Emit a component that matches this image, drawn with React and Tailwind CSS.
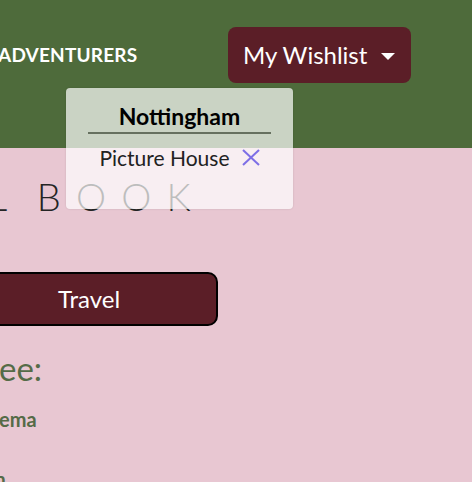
import { useState } from 'react';

export default function App() {
  const [open] = useState(true);

  return (
    <div className="relative min-h-screen w-[472px] h-[482px] overflow-hidden bg-[#e8c7d2] font-['Lato','Liberation_Sans',sans-serif]">
      {/* Navbar */}
      <header className="h-[148px] bg-[#4e6b3b] pt-[27px]">
        <div className="flex h-[56px] items-center">
          <span className="-ml-[2px] w-[138px] shrink-0 whitespace-nowrap text-[19px] font-bold tracking-[0.01em] text-white">ADVENTURERS</span>
          <button className="ml-[92px] flex h-[56px] w-[183px] items-center gap-[14px] rounded-[8px] bg-[#5b1e27] pl-[15px] text-[24px] text-white">
            My Wishlist
            <span className="mt-[2px] h-0 w-0 border-x-[7px] border-t-[7px] border-x-transparent border-t-white" />
          </button>
        </div>
      </header>

      {/* Page content */}
      <main>
        <h1 className="mt-[20px] -ml-[12px] whitespace-nowrap text-[38px] font-light tracking-[0.4em] [word-spacing:-10px] text-[#242424]">
          L BOOK
        </h1>
        <button className="mt-[47px] -ml-[40px] h-[54px] w-[258px] rounded-[10px] border-2 border-black bg-[#5b1e27] text-[24px] text-white">
          Travel
        </button>
        <h2 className="mt-[18px] -ml-[1px] text-[33px] text-[#556b47]">ee:</h2>
        <p className="mt-[10px] -ml-[1px] text-[20px] font-bold text-[#556b47]">ema</p>
        <p className="mt-[30px] -ml-[11px] text-[20px] font-bold text-[#556b47]">m</p>
      </main>

      {/* Wishlist dropdown */}
      {open && (
        <div className="absolute left-[66px] top-[88px] w-[227px] h-[121px] rounded-[4px] bg-white/70 shadow-[0_0_2px_rgba(0,0,0,0.15)]">
          <div className="mx-[22px] mt-[12px] border-b-2 border-[#66705f] text-center text-[23px] leading-[32px] font-bold text-black">
            Nottingham
          </div>
          <div className="mt-[8px] flex items-center justify-center gap-[12px] text-[21px] text-[#222]">
            <span>Picture House</span>
            <svg width="18" height="17" viewBox="0 0 18 17" fill="none" stroke="#7d6ee6" strokeWidth="2">
              <line x1="1" y1="1" x2="17" y2="16" />
              <line x1="17" y1="1" x2="1" y2="16" />
            </svg>
          </div>
        </div>
      )}
    </div>
  );
}
